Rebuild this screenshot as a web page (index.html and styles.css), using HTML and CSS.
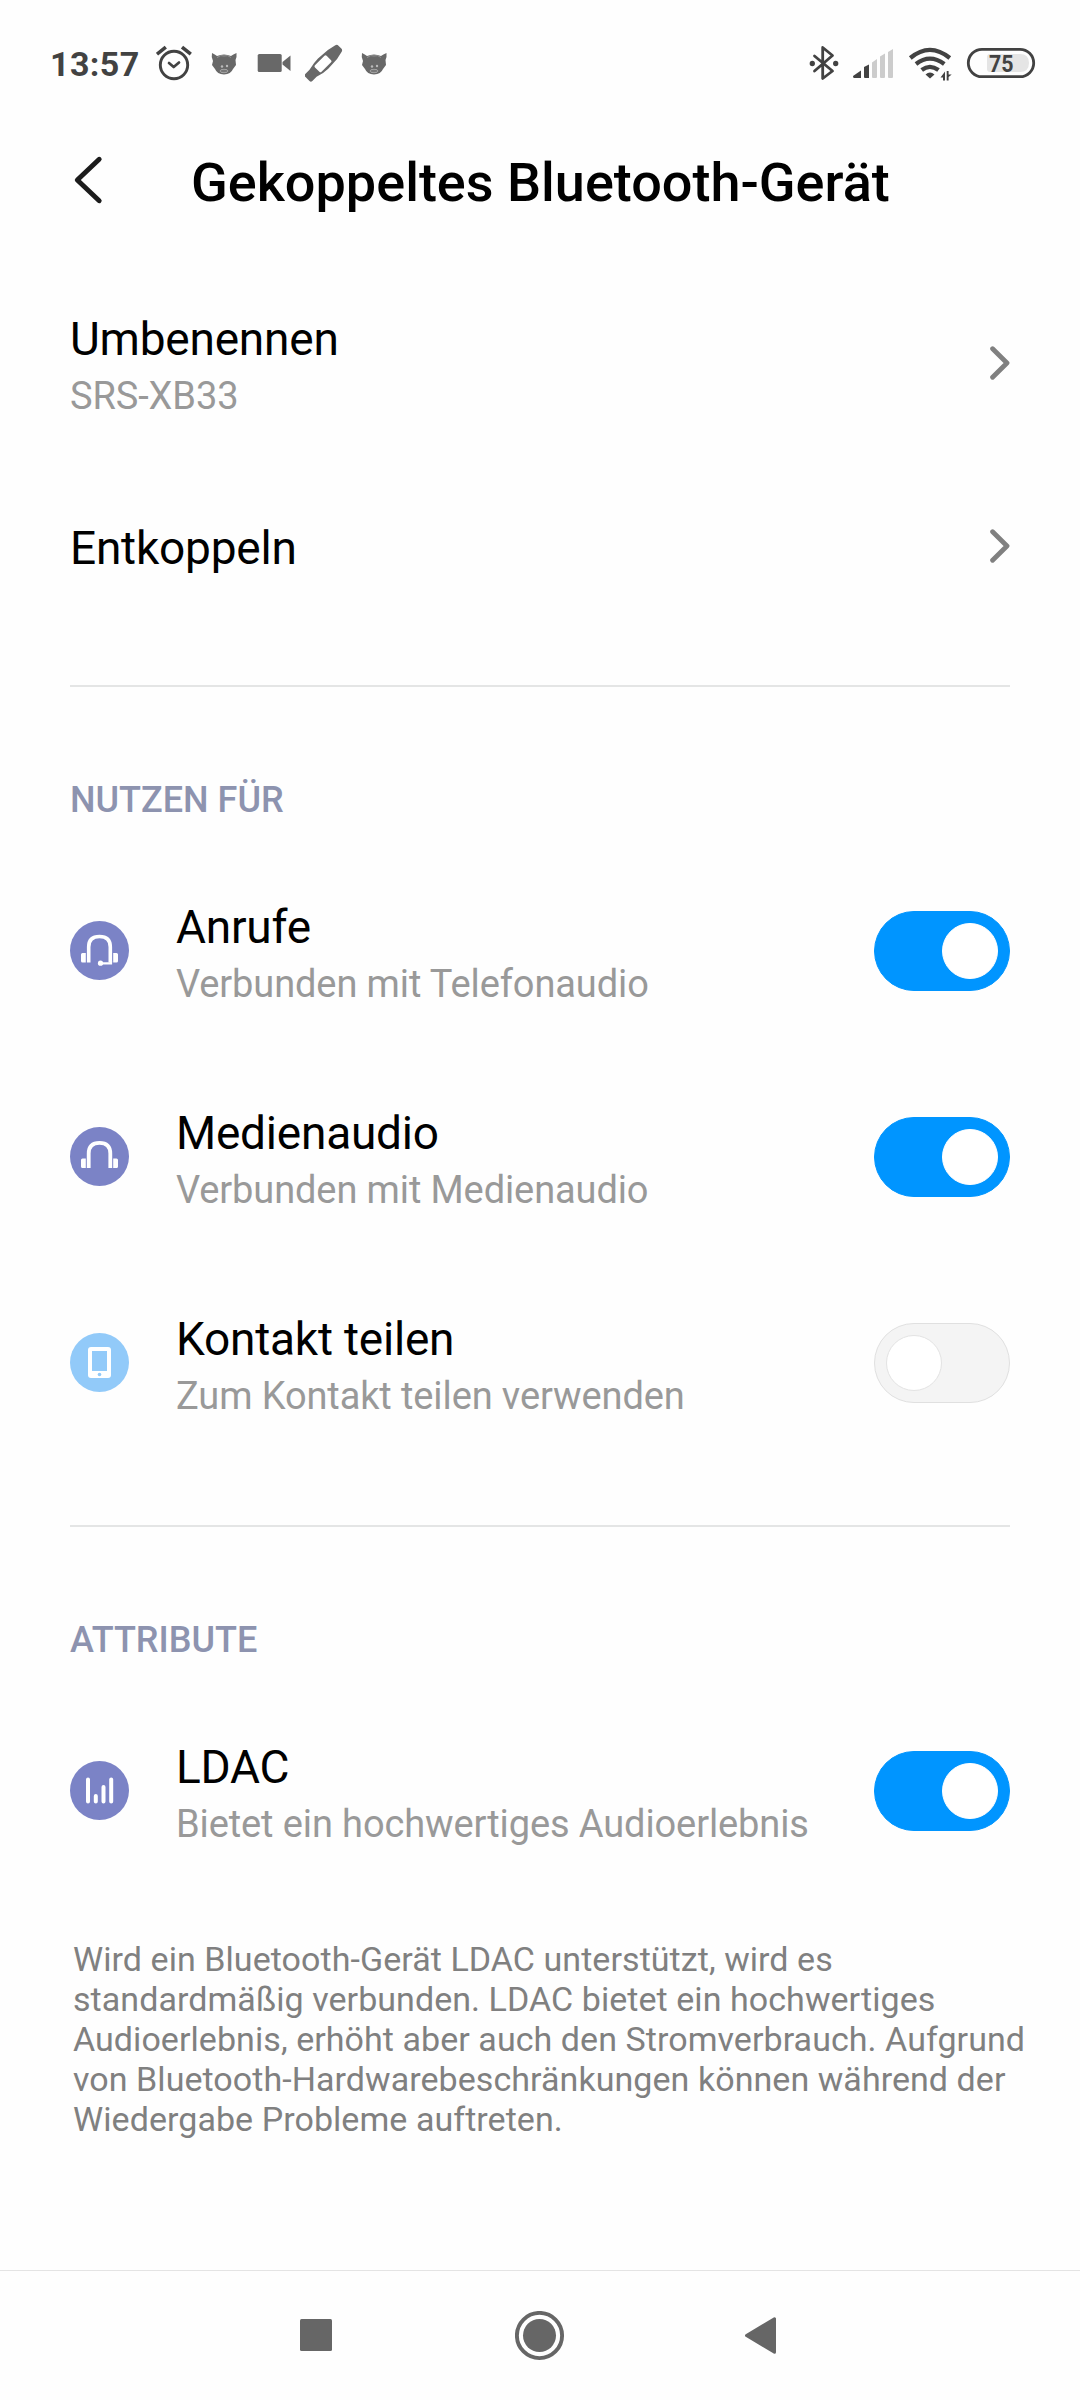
FILE: index.html
```html
<!DOCTYPE html>
<html lang="de">
<head>
<meta charset="utf-8">
<title>Gekoppeltes Bluetooth-Gerät</title>
<link rel="stylesheet" href="styles.css">
</head>
<body>
<svg class="defs" width="0" height="0">
  <symbol id="cat" viewBox="0 0 26 24">
    <path fill="#686868" d="M1 1 Q4 2.500 6 4 Q13 1 20 4 Q22 2.500 25.500 1 Q26 5 24.500 8 L25 13 L22 17 Q20 22 13 22.500 Q6 22 4 17 L1 13 L2 9 Q0 5 1 1Z"/>
    <path fill="none" stroke="#929292" stroke-width="1" d="M6 5.500 Q10 2.500 13 4 Q17 2.500 20 5.500"/>
    <circle cx="11" cy="14.500" r="1.200" fill="#bbb"/><circle cx="16" cy="14" r="1.200" fill="#bbb"/>
    <ellipse cx="13" cy="19" rx="4" ry="1.700" fill="#777" stroke="#b0b0b0" stroke-width=".8"/>
  </symbol>
  <symbol id="chevron" viewBox="0 0 20 34">
    <path d="M2.600 2.800 L17 17 L2.600 31.200" fill="none" stroke="#808080" stroke-width="4.800" stroke-linecap="round" stroke-linejoin="round"/>
  </symbol>
</svg>
<div class="statusbar">
  <div class="status-left">
    <span class="clock">13:57</span>
    <svg class="s-alarm" viewBox="156 45 36 36" fill="none" stroke="#424242" stroke-linecap="round" stroke-linejoin="round">
      <circle cx="174" cy="65" r="13.700" stroke-width="2.900"/>
      <path stroke-width="2.700" d="M169 63 L173.700 67 L179 62.500"/>
      <path stroke-width="3.600" stroke-linecap="butt" d="M157 54.200 L165.800 47.200 M182 47.200 L190.800 54.200"/>
    </svg>
    <svg class="s-cat"><use href="#cat"/></svg>
    <svg class="s-video" viewBox="257 53 34 20" fill="#686868"><rect x="257.700" y="54" width="24" height="18" rx="1.600"/><path d="M282.500 62 L290.500 55.500 V71 L282.500 64.500Z"/></svg>
    <svg class="s-brush" viewBox="305 44 38 38">
      <g transform="rotate(-45 324 63)"><path fill="#686868" d="M303 57.500 L309 57.500 Q317 55.500 323 55.500 L336 56.500 L344.500 58.500 Q346.500 59 346.500 61 V65 Q346.500 67 344.500 67.500 L336 69.500 L323 70 Q317 70 309 67.500 L303 67.500 Q301 67.500 301 65.500 V59.500 Q301 57.500 303 57.500Z"/>
      <rect x="314.500" y="58.200" width="16.500" height="9.300" rx="1.500" fill="#fff"/></g>
    </svg>
    <svg class="s-cat s-cat-last"><use href="#cat"/></svg>
  </div>
  <div class="status-right">
    <svg class="s-bt" viewBox="808 45 32 36" fill="none" stroke="#424242" stroke-width="2.800" stroke-linejoin="round" stroke-linecap="round">
      <path d="M814.500 56 L832.500 71 L822.700 78.500 V47.500 L832.500 55.500 L814.500 71"/>
      <circle cx="812.300" cy="63.500" r="1.900" fill="#424242" stroke-width="1.500"/><circle cx="835.700" cy="63.500" r="1.900" fill="#424242" stroke-width="1.500"/>
    </svg>
    <svg class="s-signal" viewBox="852 47 42 31">
      <path fill="#424242" d="M853 75 L861 69.500 V77 H854 Q853 77 853 75Z M864 66 L869 63.500 V77 H865 Q864 77 864 76Z"/>
      <path fill="#ccc" d="M872 61.500 L877 58 V76 Q877 77 876 77 H873 Q872 77 872 76Z M880 55.500 L885 52.500 V76 Q885 77 884 77 H881 Q880 77 880 76Z M888 51 L893 48 V76 Q893 77 892 77 H889 Q888 77 888 76Z"/>
    </svg>
    <svg class="s-wifi" viewBox="908 46 44 36">
      <g fill="none" stroke="#424242" stroke-width="4.300">
        <path d="M910.300 58 Q929.800 41.800 949.800 58"/><path d="M916 64 Q929.800 53.200 944.300 64"/><path d="M921.700 70 Q929.800 63.800 938.500 70"/>
      </g>
      <path fill="#424242" d="M925.500 74.500 Q930 70.500 934.500 74.500 L930 78.500Z M945 71.500 V80.500 H943 V77.500 H940.500Z M946.700 71 H948.600 V74.500 H951.700 L948.600 77 V80.500 H946.700Z"/>
    </svg>
    <svg class="s-battery" viewBox="966 47 70 32">
      <path fill="#e5e5e5" d="M990 54 H1020 Q1029 54 1029 63 Q1029 72 1020 72 H990 Q987 72 987 69 V57 Q987 54 990 54Z"/>
      <rect x="968.300" y="49.300" width="65.400" height="27.400" rx="13.700" fill="none" stroke="#424242" stroke-width="2.800"/>
      <text class="battery-text" x="989" y="71.800" textLength="24.500" lengthAdjust="spacingAndGlyphs">75</text>
    </svg>
  </div>
</div>
<header class="header">
  <svg class="back" viewBox="73 155 30 50"><path d="M99.200 159.300 L77.300 180 L99.200 200.700" fill="none" stroke="#1c1c1c" stroke-width="4.900" stroke-linecap="round" stroke-linejoin="round"/></svg>
  <h1 class="title">Gekoppeltes Bluetooth-Gerät</h1>
</header>
<main class="content">
  <div class="row">
    <div class="text"><div class="name">Umbenennen</div><div class="sub">SRS-XB33</div></div>
    <svg class="chevron"><use href="#chevron"/></svg>
  </div>
  <div class="row row-single">
    <div class="text"><div class="name">Entkoppeln</div></div>
    <svg class="chevron"><use href="#chevron"/></svg>
  </div>
  <hr class="divider">
  <h2 class="section">NUTZEN FÜR</h2>
  <div class="row">
    <svg class="icon" viewBox="0 0 60 60"><circle cx="29.500" cy="29.500" r="29.500" fill="#7b83c6"/>
      <path d="M18.700 41.500 V26 Q18.700 15.500 29.500 15.500 Q40.300 15.500 40.300 26 V41.500" fill="none" stroke="#fff" stroke-width="3.600"/>
      <path fill="#fff" d="M12.500 32 H15.800 V41.500 H12.500 Q11 41.500 11 40 V33.500 Q11 32 12.500 32Z M43.200 32 H46.500 Q48 32 48 33.500 V40 Q48 41.500 46.500 41.500 H43.200Z"/>
      <path d="M41 40 V42.300 H31" fill="none" stroke="#fff" stroke-width="2.200"/><circle cx="30.500" cy="42.200" r="2.600" fill="#fff"/></svg>
    <div class="text"><div class="name">Anrufe</div><div class="sub">Verbunden mit Telefonaudio</div></div>
    <div class="toggle on"><div class="knob"></div></div>
  </div>
  <div class="row">
    <svg class="icon" viewBox="0 0 60 60"><circle cx="29.500" cy="29.500" r="29.500" fill="#7b83c6"/>
      <path d="M18.700 41 V26.500 Q18.700 15.800 29.500 15.800 Q40.300 15.800 40.300 26.500 V41" fill="none" stroke="#fff" stroke-width="3.800"/>
      <path fill="#fff" d="M12.500 31.500 H15.800 V41 H12.500 Q11 41 11 39.500 V33 Q11 31.500 12.500 31.500Z M43.200 31.500 H46.500 Q48 31.500 48 33 V39.500 Q48 41 46.500 41 H43.200Z"/></svg>
    <div class="text"><div class="name">Medienaudio</div><div class="sub">Verbunden mit Medienaudio</div></div>
    <div class="toggle on"><div class="knob"></div></div>
  </div>
  <div class="row">
    <svg class="icon" viewBox="0 0 60 60"><circle cx="29.500" cy="29.500" r="29.500" fill="#92caf9"/>
      <rect x="18" y="14" width="23" height="31" rx="3" fill="#fff"/><rect x="22" y="18" width="15" height="20" fill="#92caf9"/><circle cx="29.500" cy="41.500" r="1.800" fill="#92caf9"/></svg>
    <div class="text"><div class="name">Kontakt teilen</div><div class="sub">Zum Kontakt teilen verwenden</div></div>
    <div class="toggle"><div class="knob"></div></div>
  </div>
  <hr class="divider divider-second">
  <h2 class="section">ATTRIBUTE</h2>
  <div class="row">
    <svg class="icon" viewBox="0 0 60 60"><circle cx="29.500" cy="29.500" r="29.500" fill="#7b83c6"/>
      <path d="M18 18.500 V40.500 M25.800 35 V40.500 M33.500 26 V40.500 M41.200 18.500 V40.500" stroke="#fff" stroke-width="4" stroke-linecap="round"/></svg>
    <div class="text"><div class="name">LDAC</div><div class="sub">Bietet ein hochwertiges Audioerlebnis</div></div>
    <div class="toggle on"><div class="knob"></div></div>
  </div>
  <p class="note">Wird ein Bluetooth-Gerät LDAC unterstützt, wird es<br>standardmäßig verbunden. LDAC bietet ein hochwertiges<br>Audioerlebnis, erhöht aber auch den Stromverbrauch. Aufgrund<br>von Bluetooth-Hardwarebeschränkungen können während der<br>Wiedergabe Probleme auftreten.</p>
</main>
<nav class="navbar">
  <svg class="nav-square" viewBox="0 0 32 32"><rect width="32" height="32" rx="1.500" fill="#666"/></svg>
  <svg class="nav-home" viewBox="0 0 50 50"><circle cx="24.500" cy="24.500" r="22.600" fill="none" stroke="#666" stroke-width="3.900"/><circle cx="24.500" cy="24.500" r="16.500" fill="#666"/></svg>
  <svg class="nav-back" viewBox="0 0 31 37"><path d="M1.500 18.500 L29.500 1.800 V35.200Z" fill="#666" stroke="#666" stroke-width="3" stroke-linejoin="round"/></svg>
</nav>
</body>
</html>
```
FILE: styles.css
```css
* { box-sizing: border-box; }
body {
  margin: 0;
  width: 1080px;
  height: 2400px;
  display: flex;
  flex-direction: column;
  background: #fefefe;
  font-family: Roboto, "Noto Sans", sans-serif;
  overflow: hidden;
}
svg { display: block; flex: none; }
.defs { position: absolute; }
.statusbar {
  flex: none;
  height: 126px;
  padding: 0 44px 0 50px;
  display: flex;
  justify-content: space-between;
  align-items: center;
}
.status-left, .status-right { display: flex; align-items: center; height: 126px; }
.clock { width: 106px; font-size: 34px; line-height: 40px; font-weight: 700; letter-spacing: 0.4px; color: #424242; margin-top: 2px; white-space: nowrap; }
.s-alarm { width: 36px; height: 36px; }
.s-cat { width: 26px; height: 24px; margin: 1px 0 0 19px; }
.s-video { width: 34px; height: 20px; margin-left: 20px; }
.s-brush { width: 38px; height: 38px; margin-left: 14px; }
.s-cat-last { margin-left: 18px; }
.s-bt { width: 32px; height: 36px; }
.s-signal { width: 42px; height: 31px; margin-left: 12px; }
.s-wifi { width: 44px; height: 36px; margin: 2px 0 0 14px; }
.s-battery { width: 70px; height: 32px; margin-left: 14px; }
.battery-text { font-size: 24px; font-weight: 700; fill: #424242; }
.header { flex: none; height: 134px; padding: 0 73px; display: flex; align-items: flex-start; }
.back { width: 30px; height: 50px; margin-top: 29px; }
.title { margin: 25px 0 0 88px; font-size: 54px; line-height: 64px; font-weight: 500; color: #000; white-space: nowrap; }
.content { flex: 1; padding: 0 70px; }
.row { height: 206px; display: flex; align-items: center; }
.row-single { height: 159px; }
.row-single .name { position: relative; top: 2px; }
.text { flex: 1; white-space: nowrap; }
.name { font-size: 46px; line-height: 66px; letter-spacing: -0.22px; color: #000; }
.sub { font-size: 38px; line-height: 48px; letter-spacing: -0.11px; color: #999; }
.chevron { width: 20px; height: 34px; }
.icon { width: 60px; height: 60px; margin-right: 46px; }
.divider { height: 2px; margin: 60px 0 0; border: 0; background: #e4e5e5; }
.divider-second { margin-top: 59px; }
.section { margin: 0; height: 161px; padding-top: 91px; font-size: 36px; line-height: 44px; font-weight: 500; color: #8d93af; }
.toggle { width: 136px; height: 80px; border-radius: 40px; padding: 11px; border: 1px solid #e0e0e0; background: #f4f4f4; display: flex; }
.toggle.on { border-color: #0095ff; background: #0095ff; justify-content: flex-end; }
.knob { width: 56px; height: 56px; border-radius: 50%; background: #fff; border: 1px solid #e3e3e3; }
.on .knob { border-color: #fff; }
.note { margin: 45px 0 0 3px; font-size: 34px; line-height: 40px; letter-spacing: 0.06px; color: #808080; white-space: nowrap; }
.navbar { flex: none; height: 130px; border-top: 1px solid #e4e4e4; padding-left: 300px; display: flex; align-items: flex-start; }
.nav-square { width: 32px; height: 32px; margin-top: 48px; }
.nav-home { width: 50px; height: 50px; margin: 40px 0 0 183px; }
.nav-back { width: 31px; height: 37px; margin: 46px 0 0 180px; }
```
